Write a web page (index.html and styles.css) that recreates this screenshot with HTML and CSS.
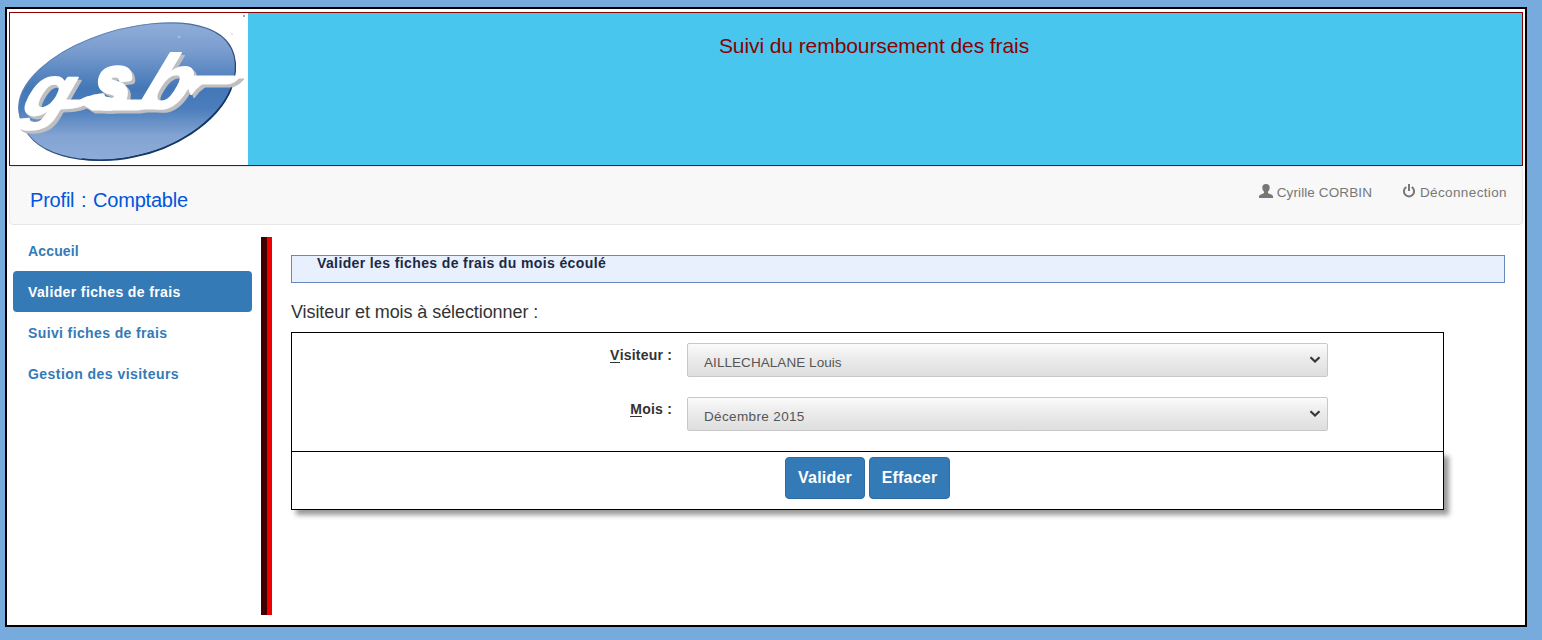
FILE: index.html
```html
<!DOCTYPE html>
<html lang="fr">
<head>
<meta charset="utf-8">
<title>Suivi du remboursement des frais</title>
<link rel="stylesheet" href="styles.css">
</head>
<body>
<div class="page">
  <header class="banner">
    <svg class="logo" viewBox="0 0 238 152" role="img" aria-label="gsb">
      <defs>
        <linearGradient id="oval" x1="0" y1="0" x2="0" y2="1">
          <stop offset="0" stop-color="#8fadd8"/>
          <stop offset=".2" stop-color="#7a9dcf"/>
          <stop offset=".48" stop-color="#4377b7"/>
          <stop offset=".62" stop-color="#4a7dbb"/>
          <stop offset=".82" stop-color="#83a3d2"/>
          <stop offset="1" stop-color="#8dacd9"/>
        </linearGradient>
        <linearGradient id="rim" x1="0" y1="0" x2="1" y2="1">
          <stop offset=".3" stop-color="#5e82b5"/>
          <stop offset=".75" stop-color="#112c55"/>
        </linearGradient>
        <g id="word">
          <text class="mark" transform="translate(10 102) skewX(-20) scale(1.16 1.1)" font-size="64">g</text>
          <text class="mark heavy" transform="translate(82 94) skewX(-8) scale(.87 .98)" font-size="74">s</text>
          <text class="mark" transform="translate(126 95) skewX(-22) scale(1 1)" font-size="76">b</text>
          <path d="M50 87H70Q82 80 94 84L116 87H140L150 96H134L128 97H82L74 92Q66 96 48 96Z"/>
          <path d="M174 65Q179 63 184 63H231Q224 71 217 71H192Q186 75 181 82L178 74Z"/>
        </g>
      </defs>
      <path d="M9 99C5 69 44 40 80 26C119 10 168 5 196 15C222 24 229 44 224 67C215 102 173 132 130 142C79 155 15 145 9 99Z" fill="url(#oval)" stroke="url(#rim)" stroke-width="1.2"/>
      <path d="M221 76C207 111 162 137 123 144C105 148 88 148 72 146" fill="none" stroke="#173966" stroke-width="1.5"/>
      <use href="#word" x="3" y="3" class="mark-shadow"/>
      <use href="#word" class="mark-face"/>
      <circle cx="234" cy="3" r="1" fill="#889"/><circle cx="222" cy="21" r=".6" fill="#999"/><circle cx="169" cy="24" r="1.3" fill="#9dc3e8"/>
    </svg>
    <h1 class="title">Suivi du remboursement des frais</h1>
  </header>

  <nav class="navbar">
    <div class="profile">Profil : Comptable</div>
    <div class="account">
      <a class="account-link"><svg class="icon" viewBox="0 0 14 14"><path d="M7 0C9.6 0 10.8 1.5 10.7 3.7C10.6 5.4 9.9 6.7 9 7.6V8.7Q9.2 9.5 11 10Q14 10.9 14 12.3V14H0V12.3Q0 10.9 3 10Q4.8 9.5 5 8.7V7.6C4.1 6.7 3.4 5.4 3.3 3.7C3.2 1.5 4.4 0 7 0Z" fill="currentColor"/></svg><span class="user">Cyrille CORBIN</span></a>
      <a class="account-link"><svg class="icon" viewBox="0 0 14 14"><path d="M4.3 3A5.1 5.1 0 1 0 9.7 3M7 0V7" fill="none" stroke="currentColor" stroke-width="2"/></svg><span class="logout">Déconnection</span></a>
    </div>
  </nav>

  <div class="columns">
    <ul class="menu">
      <li class="item first">Accueil</li>
      <li class="item active">Valider fiches de frais</li>
      <li class="item">Suivi fiches de frais</li>
      <li class="item wide">Gestion des visiteurs</li>
    </ul>
    <main class="content">
      <h2 class="notice">Valider les fiches de frais du mois écoulé</h2>
      <h3 class="subtitle">Visiteur et mois à sélectionner :</h3>
      <form class="form">
        <div class="fields">
          <div class="row">
            <span class="label"><span class="key">V</span>isiteur :</span>
            <div class="select"><span class="visitor">AILLECHALANE Louis</span><svg class="chevron" viewBox="0 0 12 8"><path d="M1.5 1.3L6 5.5L10.5 1.3" fill="none" stroke="#333738" stroke-width="2.2"/></svg></div>
          </div>
          <div class="row">
            <span class="label"><span class="key">M</span>ois :</span>
            <div class="select"><span class="month">Décembre 2015</span><svg class="chevron" viewBox="0 0 12 8"><path d="M1.5 1.3L6 5.5L10.5 1.3" fill="none" stroke="#333738" stroke-width="2.2"/></svg></div>
          </div>
        </div>
        <div class="actions">
          <button type="button" class="btn">Valider</button>
          <button type="button" class="btn last">Effacer</button>
        </div>
      </form>
    </main>
  </div>
</div>
</body>
</html>
```
FILE: styles.css
```css
* { box-sizing: border-box; }
html { background: #77aadd; }
body { margin: 7px 15px 13px 5px; height: 620px; overflow: hidden; font: 14px/20px "Liberation Sans", Arial, sans-serif; color: #333; }
h1, h2, h3, ul { margin: 0; padding: 0; font-weight: 400; list-style: none; }
.page { height: 620px; border: 2px solid #000; background: #fff; padding: 3px 2px 0; }
.banner { height: 154px; border: 1px solid #8b0000; background: #48c6ee; display: flex; }
.logo { width: 238px; height: 152px; background: #fff; flex: none; }
.mark { font-family: "Liberation Sans", Arial, sans-serif; font-weight: 700; font-style: italic; stroke-width: 2px; stroke-linejoin: round; }
.heavy { stroke-width: 6px; }
.mark-shadow { fill: #bfbfc1; stroke: #bfbfc1; }
.mark-face { fill: #fff; stroke: #fff; }
.title { flex: 1; padding: 21px 22px 0 0; text-align: center; font-size: 21px; line-height: 24px; color: #8b0000; letter-spacing: -.08px; }
.navbar { height: 59px; border: 1px solid #e7e7e7; border-radius: 4px; background: #f8f8f8; display: flex; justify-content: space-between; padding: 15px 15px 0 20px; }
.profile { font-size: 20px; line-height: 36px; color: #0055dd; letter-spacing: -.2px; word-spacing: 1.3px; }
.account { display: flex; gap: 30px; font-size: 13.5px; line-height: 22px; color: #777; }
.account-link { display: flex; gap: 4px; height: 22px; }
.user { letter-spacing: .11px; }
.logout { letter-spacing: .37px; }
.icon { width: 14px; height: 14px; margin-top: 2px; }
.columns { display: flex; }
.menu { width: 239px; margin: 5px 9px 0 4px; font-weight: 700; color: #337ab7; }
.item { height: 41px; padding: 11px 15px; letter-spacing: .38px; border-radius: 4px; }
.first { letter-spacing: .15px; }
.wide { letter-spacing: .45px; }
.active { background: #337ab7; color: #fff; }
.content { flex: 1; height: 378px; margin: 12px 18px 0 0; padding: 18px 0 0 24px; border-left: 6px solid #400000; background: linear-gradient(90deg, #ee0000 5px, #fff 5px); }
.notice { width: 1214px; height: 28px; border: 1px solid #6688bb; background: #e8f0fe; font-size: 14px; line-height: 14px; font-weight: 700; color: #1c2944; padding-left: 25px; letter-spacing: .38px; }
.subtitle { font-size: 18px; line-height: 20px; margin: 19px 0 10px; letter-spacing: -.08px; }
.form { width: 1153px; }
.fields { height: 119px; border: 1px solid #000; border-bottom: 0; padding-top: 10px; }
.row { display: flex; height: 34px; margin-bottom: 20px; }
.label { width: 380px; margin-right: 15px; padding-top: 2px; text-align: right; font-weight: 700; letter-spacing: .2px; }
.key { border-bottom: 1px solid #333; display: inline-block; line-height: 14px; }
.select { width: 641px; border: 1px solid #c8c8c8; border-radius: 2px; background: linear-gradient(#fbfbfb, #ededed 40%, #dedede); display: flex; justify-content: space-between; padding: 9px 6px 0 16px; font-size: 13.5px; color: #555; }
.visitor { letter-spacing: .06px; }
.month { letter-spacing: .36px; }
.chevron { width: 12px; height: 8px; margin-top: 3px; }
.actions { position: relative; height: 59px; border: 1px solid #000; background: #fff; box-shadow: 5px 5px 5px #999; display: flex; justify-content: center; gap: 4px; padding: 5px 0 0; }
.btn { width: 80px; height: 42px; border: 1px solid #2e6da4; border-radius: 4px; background: #337ab7; color: #fff; font: 700 16px/20px "Liberation Sans", Arial, sans-serif; letter-spacing: .2px; padding: 0; }
.last { width: 81px; }
```
